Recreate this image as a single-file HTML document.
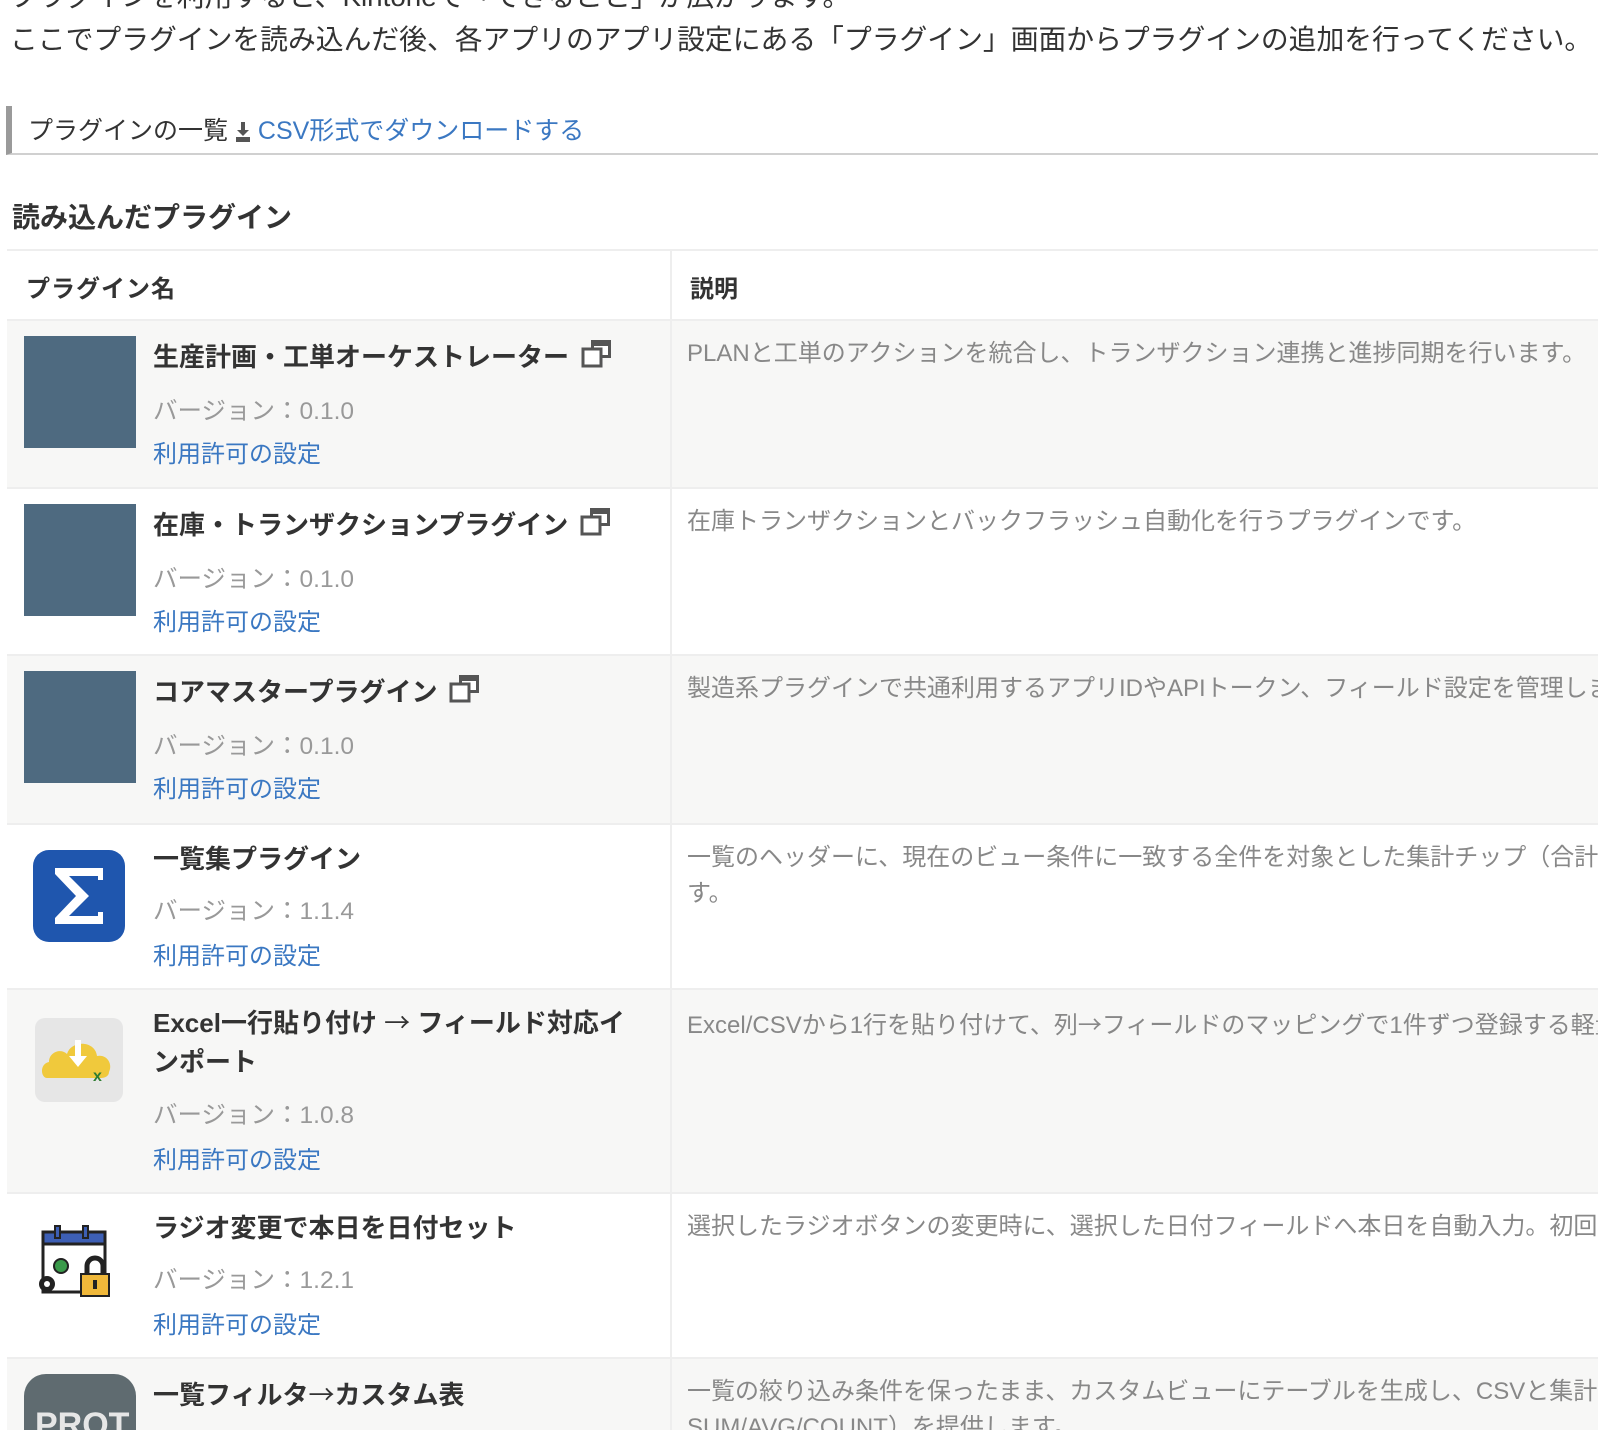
<!DOCTYPE html>
<html><head><meta charset="utf-8">
<style>
html,body{margin:0;padding:0;width:1598px;height:1430px;overflow:hidden;background:#fff;}
body{font-family:"Liberation Sans","Noto Sans CJK JP",sans-serif;color:#333;position:relative;}
.a{position:absolute;white-space:nowrap;}
.intro{font-size:27.8px;color:#333;left:10px;}
.hbar{position:absolute;left:6px;top:106px;width:1592px;height:47px;border-left:6px solid #9a9a9a;border-bottom:2px solid #d0d0d0;}
.row{position:absolute;left:7px;width:1591px;border-top:2px solid #eee;}
.row .div{position:absolute;left:663px;top:0;bottom:0;border-left:2px solid #eee;}
.g{background:#f7f7f6;}
.name{font-size:26px;font-weight:bold;color:#333;left:146px;line-height:39px;}
.ver{font-size:24.5px;color:#999;left:146px;}
.lnk{font-size:24px;color:#3b78c2;left:146px;}
.desc{font-size:24px;color:#888;left:680px;line-height:36px;}
.ic{position:absolute;left:17px;top:15px;width:112px;height:112px;background:#4e6a80;}
.win{display:inline-block;vertical-align:middle;margin-left:12px;position:relative;width:32px;height:30px;top:-6px;}
.ar{font-family:"Noto Sans CJK JP",sans-serif;font-weight:normal;}
</style></head><body>
<div class="a intro" style="top:-25px;">プラグインを利用すると、Kintoneで「できること」が広がります。</div>
<div class="a intro" style="top:18px;">ここでプラグインを読み込んだ後、各アプリのアプリ設定にある「プラグイン」画面からプラグインの追加を行ってください。</div>

<div class="hbar"></div>
<div class="a" style="left:28px;top:111px;font-size:25px;color:#333;">プラグインの一覧 <span style="display:inline-block;width:16px;height:20px;position:relative;top:3px;">
<svg width="16" height="20" viewBox="0 0 16 20"><rect x="6" y="0" width="4" height="9" fill="#555"/><path d="M2 8h12l-6 6z" fill="#555"/><rect x="1" y="15" width="14" height="5" fill="#555"/></svg></span> <span style="color:#3b78c2;">CSV形式でダウンロードする</span></div>

<div class="a" style="left:12px;top:196px;font-size:28px;font-weight:bold;color:#333;">読み込んだプラグイン</div>

<!-- header -->
<div class="row" style="top:249px;height:68px;"><div class="div"></div>
<div class="a" style="left:19px;top:18px;font-size:24px;font-weight:bold;letter-spacing:1px;">プラグイン名</div>
<div class="a" style="left:683px;top:18px;font-size:24px;font-weight:bold;">説明</div>
</div>

<!-- row1 -->
<div class="row g" style="top:319px;height:166px;"><div class="div"></div>
<div class="ic"></div>
<div class="a name" style="top:17px;">生産計画・工単オーケストレーター<span class="win"><svg width="32" height="30"><rect x="10" y="2" width="20" height="18" fill="#555"/><rect x="13" y="8" width="14" height="9" fill="#fff"/><rect x="2" y="11" width="18" height="17" fill="#fff" stroke="#555" stroke-width="3"/></svg></span></div>
<div class="a ver" style="top:71px;">バージョン：0.1.0</div>
<div class="a lnk" style="top:113px;">利用許可の設定</div>
<div class="a desc" style="top:15px;">PLANと工単のアクションを統合し、トランザクション連携と進捗同期を行います。</div>
</div>

<!-- row2 -->
<div class="row" style="top:487px;height:165px;"><div class="div"></div>
<div class="ic"></div>
<div class="a name" style="top:17px;">在庫・トランザクションプラグイン<span class="win"><svg width="32" height="30"><rect x="10" y="2" width="20" height="18" fill="#555"/><rect x="13" y="8" width="14" height="9" fill="#fff"/><rect x="2" y="11" width="18" height="17" fill="#fff" stroke="#555" stroke-width="3"/></svg></span></div>
<div class="a ver" style="top:71px;">バージョン：0.1.0</div>
<div class="a lnk" style="top:113px;">利用許可の設定</div>
<div class="a desc" style="top:15px;">在庫トランザクションとバックフラッシュ自動化を行うプラグインです。</div>
</div>

<!-- row3 -->
<div class="row g" style="top:654px;height:167px;"><div class="div"></div>
<div class="ic"></div>
<div class="a name" style="top:17px;">コアマスタープラグイン<span class="win"><svg width="32" height="30"><rect x="10" y="2" width="20" height="18" fill="#555"/><rect x="13" y="8" width="14" height="9" fill="#fff"/><rect x="2" y="11" width="18" height="17" fill="#fff" stroke="#555" stroke-width="3"/></svg></span></div>
<div class="a ver" style="top:71px;">バージョン：0.1.0</div>
<div class="a lnk" style="top:113px;">利用許可の設定</div>
<div class="a desc" style="top:15px;">製造系プラグインで共通利用するアプリIDやAPIトークン、フィールド設定を管理します。</div>
</div>

<!-- row4 -->
<div class="row" style="top:823px;height:163px;"><div class="div"></div>
<svg class="a" style="left:26px;top:25px;" width="92" height="92" viewBox="0 0 92 92"><rect x="0" y="0" width="92" height="92" rx="16" fill="#1f56ae"/><path d="M22 18h48v12h-5v-4H36l20 20-20 20h29v-4h5v12H22v-6l21-22-21-22z" fill="#fff"/></svg>
<div class="a name" style="top:15px;">一覧集プラグイン</div>
<div class="a ver" style="top:67px;">バージョン：1.1.4</div>
<div class="a lnk" style="top:111px;">利用許可の設定</div>
<div class="a desc" style="top:15px;">一覧のヘッダーに、現在のビュー条件に一致する全件を対象とした集計チップ（合計/平均/件数）を表示しま<br>す。</div>
</div>

<!-- row5 -->
<div class="row g" style="top:988px;height:202px;"><div class="div"></div>
<svg class="a" style="left:28px;top:28px;" width="88" height="84" viewBox="0 0 88 84"><rect width="88" height="84" rx="10" fill="#e6e6e6"/><path d="M12 60c-6 0-8-14 2-16 0-10 12-14 18-8 4-14 28-14 30 2 10-2 16 8 12 16 0 4-4 6-8 6z" fill="#f0c93c"/><rect x="40" y="22" width="6" height="20" fill="#fff"/><path d="M34 38h18l-9 11z" fill="#fff"/><text x="58" y="63" font-family="Liberation Sans" font-weight="bold" font-size="16" fill="#2e7d32">x</text></svg>
<div class="a name" style="top:12px;">Excel一行貼り付け <span class="ar">→</span> フィールド対応イ<br>ンポート</div>
<div class="a ver" style="top:106px;">バージョン：1.0.8</div>
<div class="a lnk" style="top:150px;">利用許可の設定</div>
<div class="a desc" style="top:15px;">Excel/CSVから1行を貼り付けて、列<span class="ar">→</span>フィールドのマッピングで1件ずつ登録する軽量インポートです。</div>
</div>

<!-- row6 -->
<div class="row" style="top:1192px;height:163px;"><div class="div"></div>
<svg class="a" style="left:30px;top:30px;" width="80" height="80" viewBox="0 0 80 80"><rect x="6" y="8" width="62" height="60" fill="#fff" stroke="#222" stroke-width="3"/><rect x="6" y="8" width="62" height="12" fill="#3d5fb5" stroke="#222" stroke-width="3"/><rect x="18" y="2" width="5" height="12" fill="#3d5fb5" stroke="#222" stroke-width="2"/><rect x="46" y="2" width="5" height="12" fill="#3d5fb5" stroke="#222" stroke-width="2"/><circle cx="24" cy="42" r="7" fill="#3a9a4a" stroke="#222" stroke-width="2"/><circle cx="10" cy="60" r="8" fill="#222"/><circle cx="10" cy="60" r="3" fill="#fff"/><path d="M50 50v-8a8 8 0 0 1 16 0v8" fill="none" stroke="#222" stroke-width="5"/><rect x="44" y="50" width="28" height="22" fill="#f0b83a" stroke="#222" stroke-width="2"/><rect x="56" y="56" width="4" height="9" fill="#222"/></svg>
<div class="a name" style="top:15px;">ラジオ変更で本日を日付セット</div>
<div class="a ver" style="top:67px;">バージョン：1.2.1</div>
<div class="a lnk" style="top:111px;">利用許可の設定</div>
<div class="a desc" style="top:15px;">選択したラジオボタンの変更時に、選択した日付フィールドへ本日を自動入力。初回のみ設定も可能です。</div>
</div>

<!-- row7 -->
<div class="row g" style="top:1357px;height:140px;"><div class="div"></div>
<div class="a" style="left:17px;top:15px;width:112px;height:112px;background:#5f6b70;border-radius:22px;overflow:hidden;"><div style="position:absolute;left:11px;top:32px;font-size:34px;font-weight:bold;color:#e6e6e6;font-family:'Liberation Sans',sans-serif;">PROT</div></div>
<div class="a name" style="top:15px;">一覧フィルタ<span class="ar">→</span>カスタム表</div>
<div class="a desc" style="top:15px;">一覧の絞り込み条件を保ったまま、カスタムビューにテーブルを生成し、CSVと集計（<br>SUM/AVG/COUNT）を提供します。</div>
</div>
</body></html>
